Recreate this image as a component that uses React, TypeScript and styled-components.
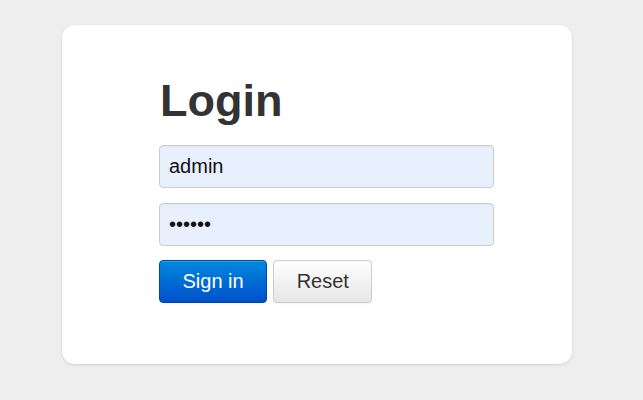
import * as React from "react";
import styled, { createGlobalStyle } from "styled-components";

const GlobalStyle = createGlobalStyle`
  html, body {
    margin: 0;
    padding: 0;
    background: #eeeeee;
    font-family: "Liberation Sans", Arial, sans-serif;
  }
`;

const App = () => {
  return (
    <Page>
      <GlobalStyle />
      <Card>
        <Form onSubmit={(e) => e.preventDefault()}>
          <Title>Login</Title>
          <Field type="text" defaultValue="admin" />
          <Field type="password" defaultValue="123456" />
          <Buttons>
            <Button primary type="submit">
              Sign in
            </Button>
            <Button type="reset">Reset</Button>
          </Buttons>
        </Form>
      </Card>
    </Page>
  );
};

export default App;

const Page = styled.div`
  width: 643px;
  height: 400px;
  padding: 25px 0 0 62px;
  box-sizing: border-box;
`;

const Card = styled.div`
  width: 510px;
  height: 339px;
  box-sizing: border-box;
  background: #ffffff;
  border-radius: 13px;
  box-shadow: 0 1px 3px rgba(0, 0, 0, 0.12);
  padding: 51px 0 0 97px;
`;

const Form = styled.form`
  display: flex;
  flex-direction: column;
  width: 335px;
`;

const Title = styled.h1`
  margin: 0 0 19px 1px;
  font-size: 45px;
  line-height: 50px;
  font-weight: bold;
  color: #333333;
`;

const Field = styled.input`
  height: 43px;
  box-sizing: border-box;
  margin: 0 0 15px;
  padding: 0 9px;
  border: 1px solid #cccccc;
  border-radius: 4px;
  background: #e8f0fe;
  font-family: "Liberation Sans", Arial, sans-serif;
  font-size: 20px;
  color: #111111;
  outline: none;
  box-shadow: inset 0 1px 1px rgba(0, 0, 0, 0.05);
`;

const Buttons = styled.div`
  display: flex;
  gap: 6px;
  margin-top: -1px;
`;

const Button = styled.button<{ primary?: boolean }>`
  height: 43px;
  box-sizing: border-box;
  padding: 0 ${(p) => (p.primary ? "22.5px" : "22.5px")};
  border-radius: 4px;
  font-family: "Liberation Sans", Arial, sans-serif;
  font-size: 20px;
  cursor: pointer;
  border: 1px solid ${(p) => (p.primary ? "#0044aa" : "#cccccc")};
  color: ${(p) => (p.primary ? "#ffffff" : "#333333")};
  background: ${(p) =>
    p.primary
      ? "linear-gradient(to bottom, #0088dd, #0050cc)"
      : "linear-gradient(to bottom, #ffffff, #e6e6e6)"};
  box-shadow: inset 0 1px 0 rgba(255, 255, 255, 0.2),
    0 1px 2px rgba(0, 0, 0, 0.05);
`;
